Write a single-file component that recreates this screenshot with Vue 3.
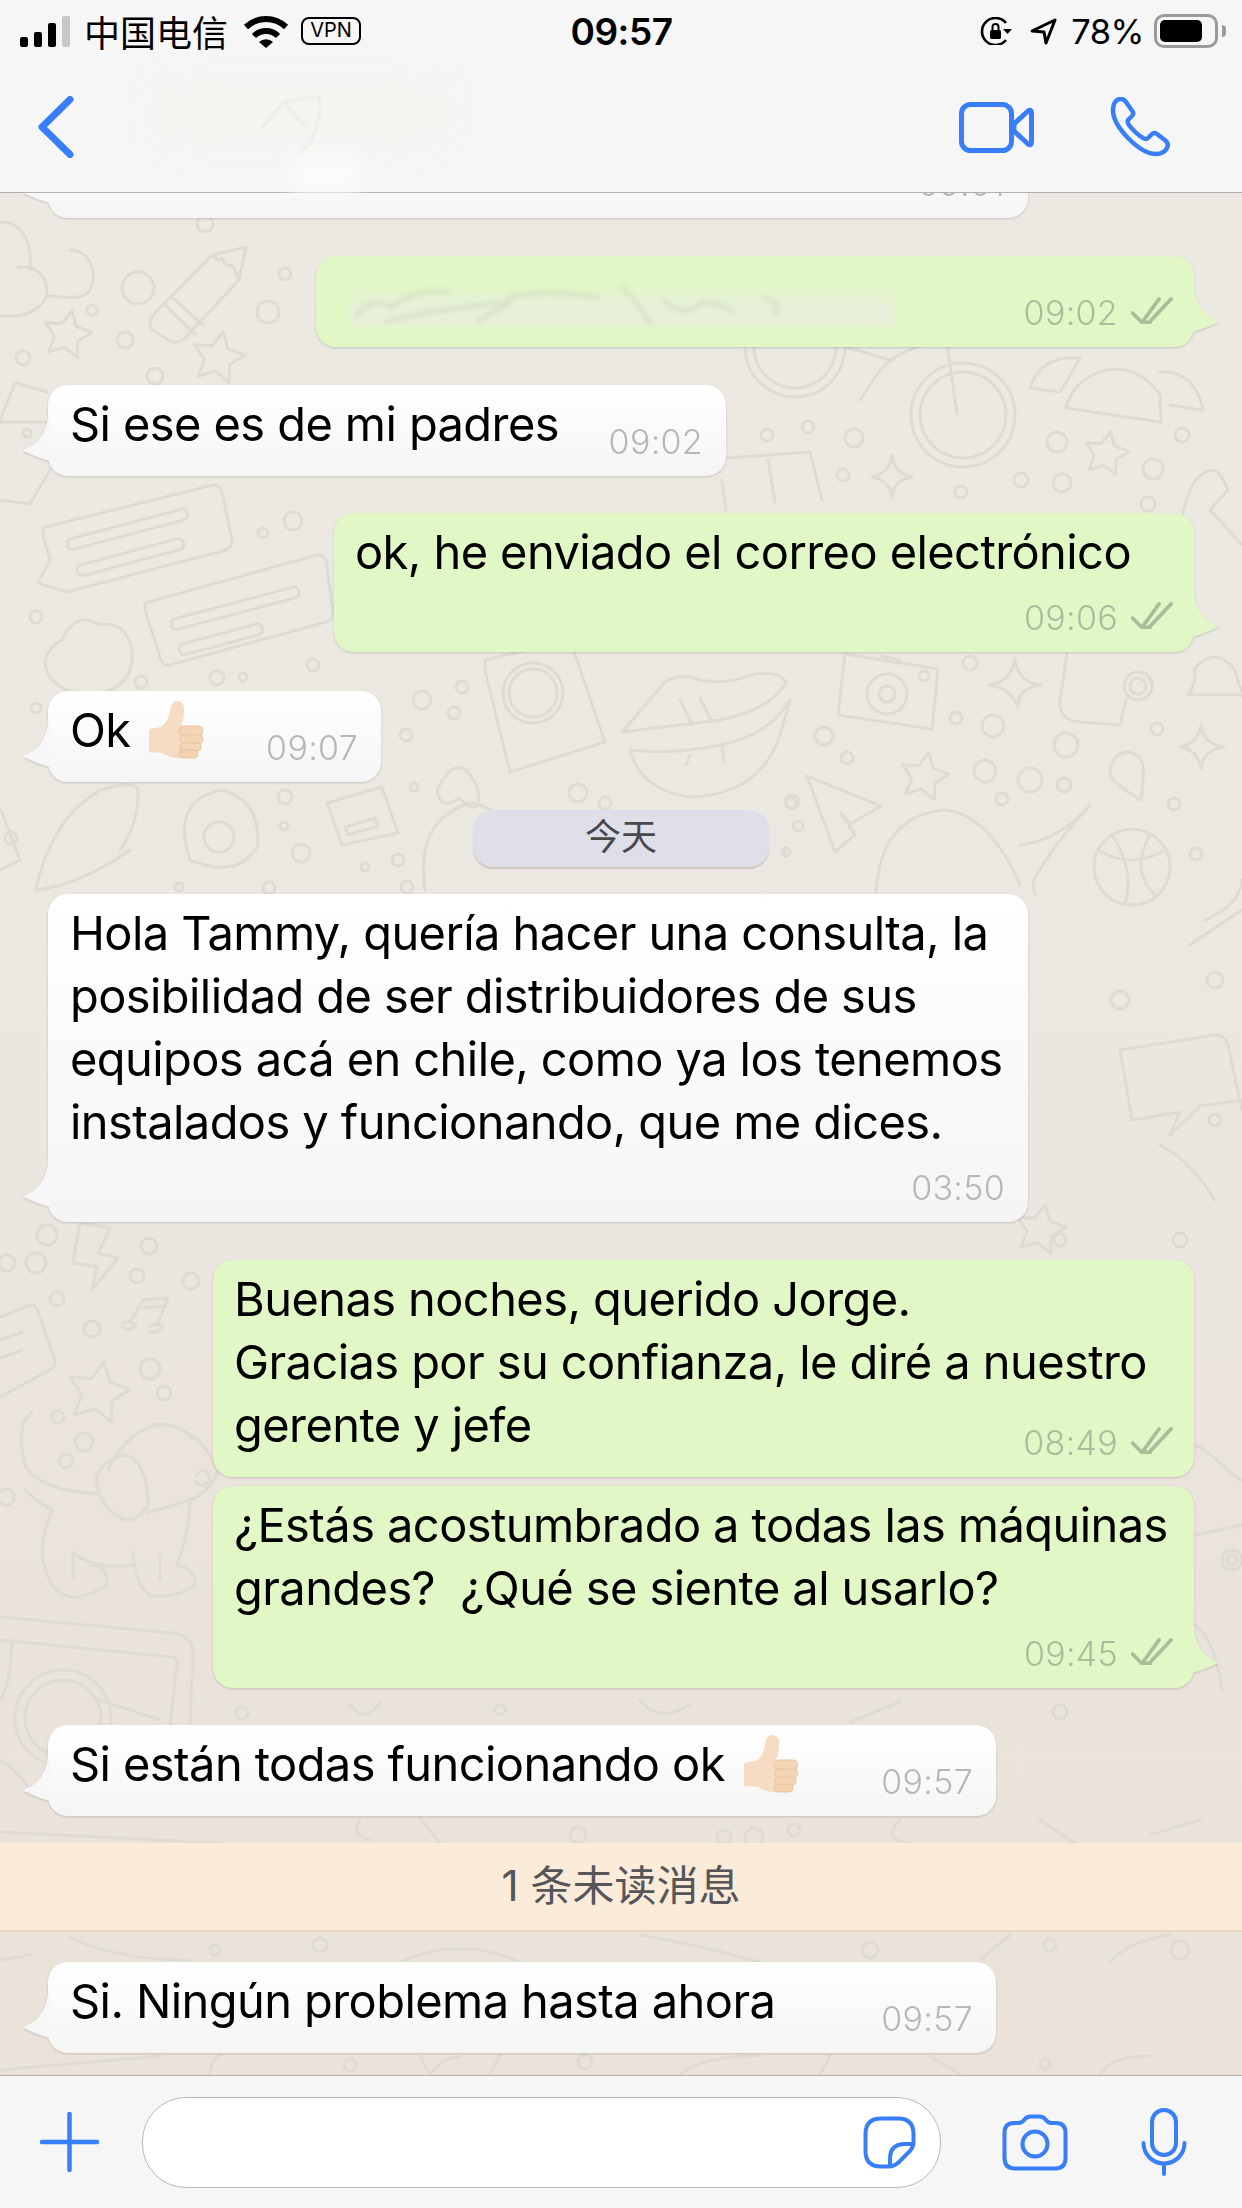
<template>
  <div class="phone">
    <header class="top">
      <div class="status">
        <div class="status-left">
          <div class="signal">
            <i v-for="h in [10, 15, 24, 31]" :key="h" :style="{ height: h + 'px' }"></i>
          </div>
          <span class="carrier">中国电信</span>
          <svg class="wifi" width="46" height="33" viewBox="0 0 46 33">
            <path d="M3 12A29 29 0 0 1 43 12" fill="none" stroke="#000" stroke-width="6" />
            <path d="M11 21A17 17 0 0 1 35 21" fill="none" stroke="#000" stroke-width="6" />
            <path d="M16 27A10 10 0 0 1 30 27L23 33Z" />
          </svg>
          <span class="vpn">VPN</span>
        </div>
        <div class="clock">09:57</div>
        <div class="status-right">
          <svg width="33" height="28" viewBox="0 0 33 28">
            <path d="M26 6A13.5 13.5 0 1 0 26 23" fill="none" stroke="#000" stroke-width="2.6" />
            <path d="M23 12h9l-4.500 5z" />
            <rect x="10" y="13" width="11" height="9" rx="1.5" />
            <path d="M12.500 13V10a3 3 0 0 1 6 0V13" fill="none" stroke="#000" stroke-width="2" />
          </svg>
          <svg class="arrow" width="27" height="27" viewBox="0 0 27 27">
            <path d="M2 13L25 2L16 25L14 14Z" fill="none" stroke="#000" stroke-width="3" stroke-linejoin="round" />
          </svg>
          <span class="percent">78%</span>
          <div class="battery"><div class="charge"></div></div>
        </div>
      </div>
      <nav class="nav">
        <svg class="back" width="36" height="62" viewBox="0 0 36 62">
          <path d="M32 3.500L4 31L32 58.500" fill="none" stroke="#377ef8" stroke-width="7" stroke-linecap="round" stroke-linejoin="round" />
        </svg>
        <div class="contact">
          <svg width="64" height="62" viewBox="0 0 64 62">
            <path d="M1 33L24 6Q40 2 59 1Q63 20 52 42Q46 54 36 59M24 6Q28 14 34 17Q38 26 47 30" fill="none" stroke="#e8e8e3" stroke-width="2" />
          </svg>
        </div>
        <svg class="video" width="75" height="51" viewBox="0 0 75 51">
          <rect x="2.500" y="2.500" width="50" height="46" rx="9" fill="none" stroke="#377ef8" stroke-width="5" />
          <path d="M55 22L69 9Q72.500 7 72.500 11V40Q72.500 44 69 42L55 29Z" fill="none" stroke="#377ef8" stroke-width="5" stroke-linejoin="round" />
        </svg>
        <svg class="call" width="60" height="60" viewBox="0 0 60 60">
          <path d="M11 2Q14 2 16 5L23 15Q24 18 21 20L18 23Q17 25 19 28Q25 36 33 41Q36 43 38 41L42 37Q44 35 47 37L56 44Q59 47 57 51Q54 57 46 57Q34 57 19 42Q3 26 3 13Q3 6 7 3Q9 2 11 2Z" fill="none" stroke="#377ef8" stroke-width="4.500" stroke-linejoin="round" />
        </svg>
      </nav>
    </header>

    <main class="chat">
      <svg class="wallpaper" width="1242" height="1882" viewBox="0 193 1242 1882">
        <g fill="none" stroke="#dedbd4" stroke-width="3" stroke-linecap="round" stroke-linejoin="round">
          <circle v-for="c in dots" :key="c.join()" :cx="c[0]" :cy="c[1]" :r="c[2]" />
          <path v-for="s in stars" :key="s" :d="s" />
          <path v-for="(d, i) in doodles" :key="i" :d="d" />
          <rect v-for="r in pills" :key="r.join()" :x="r[0]" :y="r[1]" :width="r[2]" height="11" rx="5" :transform="`rotate(${r[3]} ${r[0]} ${r[1]})`" />
        </g>
      </svg>

      <template v-for="item in items" :key="item.id">
        <div v-if="item.type === 'day'" class="day" :style="{ marginTop: item.gap + 'px' }">今天</div>
        <div v-else-if="item.type === 'unread'" class="unread" :style="{ marginTop: item.gap + 'px' }">1 条未读消息</div>
        <div
          v-else
          class="bubble"
          :class="[item.side, { tail: item.tail, tall: item.tall, short: item.short }]"
          :style="{ marginTop: item.gap + 'px', width: item.width + 'px' }"
        >
          <div v-if="item.blurred" class="blurred">
            <svg width="543" height="40" viewBox="0 0 543 40">
              <path d="M4 30Q22 8 40 22Q62 2 100 6M34 36Q76 24 160 16M160 16L126 36M156 12Q196 2 248 12M270 0Q290 20 300 40M312 14Q332 34 352 16Q372 18 384 26M412 12Q436 18 422 30" fill="none" stroke="#d3dbc1" stroke-width="3" />
            </svg>
          </div>
          <div v-else class="text">{{ item.text }}<svg v-if="item.emoji" class="thumb" width="54" height="59" viewBox="0 0 54 59">
              <path d="M0 28L12 26Q20 20 21 9Q22 1 27 0Q35 0 35 8Q35 18 32 25L48 25Q54 26 53 31Q54 36 51 38Q53 42 50 45Q51 50 48 52Q46 58 40 57L30 57Q20 57 14 52L0 51Z" fill="#f6dcc2" />
              <rect x="30" y="25" width="24" height="10" rx="5" fill="#f4d6b6" stroke="#e8c49f" />
              <rect x="31" y="34" width="23" height="9" rx="4.500" fill="#f4d6b6" stroke="#e8c49f" />
              <rect x="31" y="42" width="21" height="8" rx="4" fill="#f4d6b6" stroke="#e8c49f" />
              <rect x="30" y="49" width="19" height="8" rx="4" fill="#f2d2b0" stroke="#e8c49f" />
            </svg></div>
          <div class="meta">
            <span class="time">{{ item.time }}</span>
            <svg v-if="item.side === 'out'" class="ticks" width="42" height="27" viewBox="0 0 42 27">
              <path d="M1.500 16L11 25.500L28 2M18 25.500L40 2M13 25.500H19" fill="none" stroke="#a9bd9a" stroke-width="3.800" stroke-linecap="round" stroke-linejoin="round" />
            </svg>
          </div>
        </div>
      </template>
    </main>

    <footer class="composer">
      <svg class="plus" width="59" height="60" viewBox="0 0 59 60">
        <path d="M29.500 2V58M2 30H57" fill="none" stroke="#377ef8" stroke-width="4.500" stroke-linecap="round" />
      </svg>
      <div class="input">
        <svg width="53" height="53" viewBox="0 0 53 53">
          <path d="M2.500 18Q2.500 2.500 18 2.500H35Q50.500 2.500 50.500 18V26Q50.500 31 47 35L36 46Q31 50.500 26 50.500H18Q2.500 50.500 2.500 35ZM50 28H42Q27 28 27 43V50" fill="none" stroke="#377ef8" stroke-width="4" />
        </svg>
      </div>
      <svg class="camera" width="66" height="57" viewBox="0 0 66 57">
        <path d="M12 9H17Q20 9 23 5Q25 2.500 29 2.500H37Q41 2.500 43 5Q46 9 49 9H54Q63.500 9 63.500 19V44Q63.500 54.500 53 54.500H13Q2.500 54.500 2.500 44V19Q2.500 9 12 9Z" fill="none" stroke="#377ef8" stroke-width="4" />
        <circle cx="33" cy="30" r="12.500" fill="none" stroke="#377ef8" stroke-width="4" />
      </svg>
      <svg class="mic" width="46" height="68" viewBox="0 0 46 68">
        <rect x="11" y="2" width="24" height="45" rx="12" fill="none" stroke="#377ef8" stroke-width="4" />
        <path d="M2.500 35A20.500 20.500 0 0 0 43.500 35M23 56V66" fill="none" stroke="#377ef8" stroke-width="4" stroke-linecap="round" />
      </svg>
    </footer>
  </div>
</template>

<script setup>
const items = [
  { id: 1, side: 'in', width: 980, gap: -66, text: ' ', time: '09:01', tail: true, short: true },
  { id: 2, side: 'out', width: 878, gap: 38, blurred: true, time: '09:02', tail: true, short: true },
  { id: 3, side: 'in', width: 678, gap: 38, text: 'Si ese es de mi padres', time: '09:02', tail: true, short: true },
  { id: 4, side: 'out', width: 860, gap: 37, text: 'ok, he enviado el correo electrónico', time: '09:06', tail: true, tall: true },
  { id: 5, side: 'in', width: 333, gap: 39, text: 'Ok ', emoji: true, time: '09:07', tail: true, short: true },
  { id: 6, type: 'day', gap: 28 },
  { id: 7, side: 'in', width: 980, gap: 27, text: 'Hola Tammy, quería hacer una consulta, la\nposibilidad de ser distribuidores de sus\nequipos acá en chile, como ya los tenemos\ninstalados y funcionando, que me dices.', time: '03:50', tail: true, tall: true },
  { id: 8, side: 'out', width: 981, gap: 38, text: 'Buenas noches, querido Jorge.\nGracias por su confianza, le diré a nuestro\ngerente y jefe', time: '08:49', short: true },
  { id: 9, side: 'out', width: 981, gap: 9, text: '¿Estás acostumbrado a todas las máquinas\ngrandes?  ¿Qué se siente al usarlo?', time: '09:45', tail: true, tall: true },
  { id: 10, side: 'in', width: 948, gap: 37, text: 'Si están todas funcionando ok ', emoji: true, time: '09:57', tail: true, short: true },
  { id: 11, type: 'unread', gap: 27 },
  { id: 12, side: 'in', width: 948, gap: 30, text: 'Si. Ningún problema hasta ahora', time: '09:57', tail: true, short: true },
]

// wallpaper doodles, page coordinates
const dots = [
  [138, 288, 16], [92, 310, 5], [125, 340, 8], [23, 358, 7], [155, 376, 8], [268, 312, 11], [285, 274, 6], [205, 224, 8],
  [263, 533, 5], [293, 521, 9], [36, 617, 6], [313, 665, 6], [217, 678, 7], [243, 677, 4], [141, 682, 6], [27, 433, 4],
  [767, 435, 6], [808, 427, 6], [854, 438, 9], [1057, 442, 10], [1182, 435, 7], [1153, 469, 10], [843, 475, 6], [961, 492, 6],
  [1021, 480, 7], [1062, 483, 9], [1148, 504, 7], [970, 663, 7], [924, 676, 5], [956, 718, 6], [993, 726, 11], [824, 736, 9],
  [847, 758, 6], [1066, 745, 12], [1157, 729, 6], [985, 771, 11], [1030, 780, 12], [1064, 785, 7], [1002, 799, 6], [792, 802, 7],
  [798, 826, 5], [1174, 804, 6], [1196, 854, 6], [786, 852, 4], [422, 700, 9], [454, 713, 6], [462, 687, 6], [406, 735, 6],
  [414, 787, 4], [578, 793, 9], [605, 803, 6], [285, 797, 7], [284, 826, 4], [301, 853, 9], [365, 867, 4], [398, 860, 6],
  [179, 887, 4], [269, 888, 6], [407, 887, 6], [11, 838, 6], [36, 708, 5], [791, 803, 5], [787, 852, 3],
  [47, 1235, 10], [7, 1263, 8], [36, 1263, 10], [149, 1246, 8], [137, 1276, 7], [191, 1281, 8], [57, 1299, 7], [92, 1329, 8],
  [150, 1369, 10], [164, 1393, 7], [58, 1417, 6], [84, 1442, 9], [66, 1461, 7], [6, 1497, 8],
  [1232, 1560, 10], [1232, 1560, 5], [1120, 1000, 9], [1180, 1240, 7], [1215, 980, 8], [1060, 1240, 6], [1215, 1120, 6],
  [578, 1835, 8], [794, 1830, 6], [754, 1837, 9], [724, 1837, 7], [242, 1713, 6], [1060, 1712, 7], [500, 1710, 5],
  [320, 1945, 7], [215, 1950, 5], [870, 1950, 8], [1050, 1945, 6], [1180, 1950, 9], [350, 2065, 6], [585, 2062, 7], [1045, 2064, 5],
  [63, 1718, 48], [63, 1718, 38], [887, 694, 20], [887, 694, 8], [1138, 686, 14], [1138, 686, 8], [963, 415, 52], [963, 415, 43],
  [795, 347, 50], [795, 347, 41], [533, 693, 30], [533, 693, 24], [219, 837, 15], [1132, 867, 38],
]

function star(cx, cy, r) {
  let d = ''
  for (let i = 0; i < 10; i++) {
    const rad = i % 2 ? r * 0.5 : r
    const a = -Math.PI / 2 + 0.2 + (i * Math.PI) / 5
    d += (i ? 'L' : 'M') + (cx + rad * Math.cos(a)).toFixed(1) + ' ' + (cy + rad * Math.sin(a)).toFixed(1)
  }
  return d + 'Z'
}

const stars = [
  star(67, 335, 25), star(218, 358, 27), star(1106, 454, 23), star(924, 777, 25), star(98, 1393, 32), star(1040, 1230, 26),
  'M892 455Q894 474 912 477Q894 480 892 497Q889 480 872 477Q889 474 892 455Z',
  'M1015 658Q1017 682 1041 685Q1017 688 1018 708Q1012 688 989 685Q1012 682 1015 658Z',
  'M1201 725Q1203 744 1224 747Q1203 750 1201 769Q1198 750 1180 747Q1198 744 1201 725Z',
]

const doodles = [
  // pencil
  'M246 247L212 255L156 312Q145 323 154 331L170 341Q178 345 186 337L239 280Z',
  'M165 305L195 334M172 297L203 325M212 255Q218 262 222 258Q226 268 232 265Q236 272 239 280',
  // cloud left
  'M0 222C25 222 32 245 30 270M18 268C40 262 50 285 46 295M70 250C95 250 100 285 85 295C75 300 60 296 48 296M0 316C25 318 40 310 47 296',
  'M15 383L47 392M0 420L15 383M0 422H48M0 500L30 504L50 470',
  // chat cards
  'M45 527L213 485Q220 485 222 492L232 540Q232 548 226 550L67 592L38 583L50 560L43 535Q43 529 45 527Z',
  'M145 603L317 555Q324 555 326 560L333 612Q333 620 326 622L170 665Q163 666 161 660L145 610Z',
  // cloud blob
  'M62 640Q75 610 100 625Q125 620 132 650Q135 690 90 695Q45 690 45 660Q50 645 62 640Z',
  // bike and burger
  'M947 345L957 413M840 345L890 360M860 400L880 370Q900 350 925 345',
  'M1066 408C1075 370 1130 350 1160 395L1161 422Z',
  'M1030 388Q1040 355 1080 358L1060 392ZM1160 372Q1195 370 1203 410L1170 405',
  // book
  'M726 458L810 452L822 500M768 460L775 502M722 480L726 510',
  // toothbrush
  'M1182 520Q1190 470 1215 470Q1222 475 1228 490L1210 510L1242 545',
  // camera
  'M845 654L938 669L932 729L838 715Z',
  'M881 656L900 660',
  // mug and bell
  'M1067 654L1060 700Q1058 720 1080 722L1120 725L1126 700',
  'M1195 668Q1215 645 1235 670Q1240 690 1245 695H1188Q1196 685 1195 668Z',
  // pin, plane, basketball
  'M1126 752Q1110 755 1110 775Q1115 785 1141 800Q1145 770 1142 762Q1138 752 1126 752Z',
  'M807 776L881 806L850 824L841 813L855 835L835 852Z',
  'M1098 850Q1130 870 1165 850M1112 835Q1135 870 1125 904M1150 835Q1130 870 1155 895',
  // helmet and spoon
  'M876 894Q880 815 945 810Q990 815 1020 885M1020 845Q1060 840 1090 805Q1050 850 1040 870Q1030 880 1035 894',
  // phones
  'M485 660L570 640L605 742L510 772L485 670Z',
  'M327 803L342 845L398 833L382 787ZM345 827L375 818L378 826L348 835Z',
  // lips
  'M622 732L665 682Q680 672 700 680Q730 685 750 675Q780 670 786 683Q770 710 720 720Z',
  'M630 750Q640 790 690 797Q760 795 780 735L790 700Q770 735 720 745Q670 755 630 750Z',
  'M680 700L692 725M700 698L712 722M690 755L686 765M722 745L724 762',
  'M437 790Q460 745 478 790Q482 820 459 798Q440 812 437 790Z',
  // leaf and blob
  'M36 890Q50 820 100 790Q135 780 138 790Q140 820 120 850M36 890Q80 885 130 850',
  'M190 860Q170 800 222 790Q260 800 258 845Q240 880 190 860Z',
  'M425 890Q415 820 470 803Q490 805 510 825M1 810L20 860M0 870L20 860',
  // bolt, note, card, dog
  'M80 1223L110 1228L98 1253L118 1258L92 1290L97 1267L73 1263Z',
  'M143 1300L130 1323M143 1300L168 1298L157 1326M143 1308L166 1306',
  'M123 1323Q130 1320 136 1325Q130 1332 122 1327M150 1326Q157 1322 163 1326Q157 1335 150 1331',
  'M0 1317L30 1305Q36 1305 38 1312L55 1360Q56 1367 50 1370L0 1397',
  'M0 1340L22 1332M0 1358L22 1350',
  'M32 1412Q15 1425 25 1465Q38 1490 97 1494M25 1490Q35 1500 52 1510Q40 1540 43 1560Q50 1595 72 1597Q90 1597 107 1585Q108 1565 90 1565',
  'M108 1470Q130 1425 165 1425Q200 1430 218 1470Q212 1490 190 1500L147 1513',
  'M96 1480Q100 1460 125 1455Q147 1460 148 1505Q140 1520 125 1520Q100 1510 96 1480Z',
  'M190 1500Q190 1530 177 1565Q197 1570 195 1585Q175 1600 150 1595Q135 1585 133 1552',
  'M73 1553V1577M73 1553Q95 1570 133 1565M160 1555V1580',
  'M152 1425Q175 1420 192 1438M196 1475Q205 1465 210 1478Q205 1490 196 1482',
  'M0 1617L173 1633Q193 1636 193 1653L190 1727M0 1640L173 1657Q177 1658 177 1663L170 1727',
  // right side filler
  'M1194 1445C1210 1450 1225 1470 1240 1480M1195 1535Q1220 1530 1242 1525M1195 1625Q1215 1640 1222 1690',
  'M1120 1050L1215 1035Q1225 1035 1228 1045L1242 1110M1120 1050L1132 1120L1180 1112L1170 1135L1200 1106L1242 1100',
  'M1205 920Q1240 905 1242 880M1190 945L1242 910M1160 1145Q1190 1160 1215 1200',
  'M0 1700Q10 1690 12 1640M0 1760Q18 1770 30 1790M10 1850L35 1900M0 1960L30 1955',
  'M0 1832L219 1843M360 1820Q350 1835 370 1840M420 1818L440 1843M900 1820Q880 1840 910 1843M1040 1820L1075 1843M1150 1835L1200 1820',
  'M100 1700L160 1720M350 1705Q365 1725 380 1703M640 1700Q660 1725 690 1704M850 1722L900 1702',
  'M70 1938Q120 1960 190 1960M400 1962Q460 1935 520 1962M640 1935Q700 1945 760 1962M980 1960L1010 1935M1110 1962Q1130 1940 1170 1935',
  'M0 2070L160 2056M210 2075Q210 2060 220 2055M430 2075Q440 2058 460 2057M420 2056L430 2075M500 2055L490 2075M680 2075Q700 2056 760 2056M820 2075L830 2055M930 2056L960 2075M1100 2075Q1110 2056 1150 2056',
]

const pills = [
  [66, 540, 124, -15], [76, 566, 110, -15], [170, 620, 132, -15], [178, 645, 86, -15],
]
</script>

<style scoped>
.phone {
  width: 1242px;
  height: 2208px;
  display: flex;
  flex-direction: column;
  font-family: Inter, "Noto Sans CJK SC", sans-serif;
  color: #000;
  overflow: hidden;
}

.top {
  height: 193px;
  flex: none;
  background: #f6f6f6;
  border-bottom: 1px solid #b2b2b2;
  box-sizing: border-box;
  position: relative;
  z-index: 2;
}

.status {
  height: 62px;
  padding: 0 16px 0 20px;
  display: grid;
  grid-template-columns: 1fr auto 1fr;
  align-items: center;
}

.status-left,
.status-right {
  display: flex;
  align-items: center;
}

.status-right {
  justify-content: flex-end;
}

.signal {
  display: flex;
  align-items: flex-end;
  gap: 6px;
  width: 51px;
  height: 31px;
}

.signal i {
  width: 8px;
  border-radius: 2px;
  background: #000;
}

.signal i:last-child {
  background: #c8c8c8;
}

.carrier {
  margin-left: 13px;
  font-size: 36px;
  line-height: 40px;
  font-family: "Noto Sans CJK SC", sans-serif;
}

.wifi {
  margin-left: 15px;
}

.vpn {
  margin-left: 12px;
  width: 60px;
  height: 28px;
  box-sizing: border-box;
  border: 2.500px solid #000;
  border-radius: 8px;
  font-size: 20px;
  line-height: 23px;
  text-align: center;
}

.clock {
  font-size: 37px;
  font-weight: 600;
  letter-spacing: -0.500px;
  margin-left: -3px;
}

.arrow {
  margin-left: 17px;
}

.percent {
  margin-left: 14px;
  font-size: 34.500px;
  letter-spacing: -0.500px;
}

.battery {
  margin-left: 10px;
  width: 64px;
  height: 34px;
  box-sizing: border-box;
  border: 3px solid #9a9a9a;
  border-radius: 10px;
  padding: 3px;
  margin-right: 8px;
  position: relative;
}

.battery::after {
  content: "";
  position: absolute;
  right: -11px;
  top: 8px;
  width: 4px;
  height: 12px;
  border-radius: 0 4px 4px 0;
  background: #9a9a9a;
}

.charge {
  width: 42px;
  height: 22px;
  border-radius: 5px;
  background: #000;
}

.nav {
  height: 130px;
  padding: 0 72px 0 38px;
  display: flex;
  align-items: center;
  position: relative;
}

.contact {
  margin-left: 186px;
  width: 64px;
  height: 62px;
  position: relative;
}

.contact svg {
  position: relative;
  filter: blur(0.800px);
}

/* the blurred out name and picture of the contact */
.contact::before {
  content: "";
  position: absolute;
  left: -110px;
  top: -15px;
  width: 300px;
  height: 62px;
  border-radius: 30px;
  background: #f4f4f0;
  filter: blur(18px);
}

.contact::after {
  content: "";
  position: absolute;
  left: 30px;
  top: 58px;
  width: 70px;
  height: 40px;
  background: #fafaf9;
  filter: blur(8px);
}

.video {
  margin-left: 635px;
}

.call {
  margin-left: 76px;
}

.chat {
  flex: 1;
  position: relative;
  overflow: hidden;
  display: flex;
  flex-direction: column;
  background: linear-gradient(#ece9e3, #ebe8e1 40%, #eae3dc 75%, #ebe3da);
}

.wallpaper {
  position: absolute;
  left: 0;
  top: 0;
}

.bubble {
  position: relative;
  box-sizing: border-box;
  flex: none;
  padding: 7px 22px 69px;
  border-radius: 20px;
  filter: drop-shadow(0 1px 1px rgba(0, 0, 0, 0.16));
}

.bubble.short {
  padding-bottom: 21px;
}

.bubble.in {
  margin-left: 48px;
  align-self: flex-start;
  background: linear-gradient(#fff, #f5f5f5);
}

.bubble.out {
  margin-right: 48px;
  align-self: flex-end;
  background: #e1f7c5;
  padding-left: 21px;
}

.bubble.tail::after {
  content: "";
  position: absolute;
  right: -26px;
  bottom: 14px;
  width: 28px;
  height: 46px;
  clip-path: path("M2 0C3 14 10 28 25 33Q28 35 24 36C16 40 8 43 0 45L0 0Z");
}

.bubble.out.tail::after {
  background: #e1f7c5;
}

.bubble.in.tail::after {
  right: auto;
  left: -26px;
  transform: scaleX(-1);
  background: #f7f7f7;
}

.text {
  min-height: 63px;
  font-size: 47px;
  line-height: 63px;
  letter-spacing: -0.580px;
  white-space: pre-wrap;
}

.thumb {
  margin-left: 6px;
  vertical-align: -13px;
}

.blurred {
  height: 63px;
  display: flex;
  align-items: flex-end;
  padding-left: 14px;
}

.blurred svg {
  background: linear-gradient(#e1f7c5, #e8efda 55%, #e8efda);
  filter: blur(2.500px);
}

.meta {
  position: absolute;
  right: 23px;
  bottom: 18px;
  display: flex;
  align-items: center;
  gap: 13px;
  height: 33px;
}

.out .meta {
  right: 21px;
  bottom: 18px;
}

.time {
  font-size: 34px;
  line-height: 33px;
  font-weight: 300;
  letter-spacing: 0.300px;
  color: #b7b7b7;
}

.out .time {
  color: #aabc9e;
}

.ticks {
  margin-top: -4px;
}

.day {
  position: relative;
  flex: none;
  align-self: center;
  width: 296px;
  height: 57px;
  border-radius: 20px;
  background: #dedfe9;
  box-shadow: 0 2px 1px rgba(120, 100, 80, 0.25);
  color: #48484c;
  font-size: 36px;
  line-height: 54px;
  text-align: center;
}

.unread {
  position: relative;
  flex: none;
  height: 89px;
  box-sizing: border-box;
  background: #fbebd9;
  border-bottom: 2px solid #e7d6c1;
  color: #55555a;
  font-size: 42px;
  line-height: 86px;
  text-align: center;
}

.composer {
  height: 133px;
  flex: none;
  box-sizing: border-box;
  background: #f6f6f6;
  border-top: 1px solid #b2b2b2;
  padding-left: 40px;
  display: flex;
  align-items: center;
}

.plus {
  flex: none;
}

.input {
  margin-left: 43px;
  width: 799px;
  height: 91px;
  flex: none;
  box-sizing: border-box;
  background: #fff;
  border: 1.500px solid #b9b9b9;
  border-radius: 44px;
  padding-right: 24px;
  display: flex;
  align-items: center;
  justify-content: flex-end;
}

.camera {
  margin-left: 61px;
  flex: none;
}

.mic {
  margin-left: 73px;
  flex: none;
}
</style>

<style>
html,
body {
  margin: 0;
  background: #f6f6f6;
}
</style>
